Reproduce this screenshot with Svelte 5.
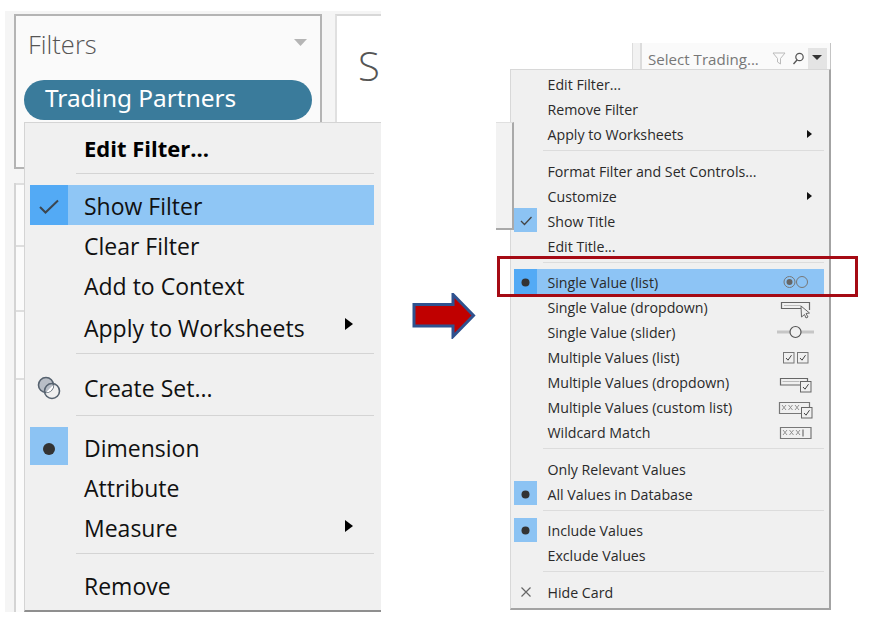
<script>
  const leftMenu = [
    [{ t: 'Edit Filter...', bold: true }],
    [
      { t: 'Show Filter', icon: 'check', hl: true },
      { t: 'Clear Filter' },
      { t: 'Add to Context' },
      { t: 'Apply to Worksheets', sub: true, nudge: true }
    ],
    [{ t: 'Create Set...', icon: 'set', nudge: true, tall: true }],
    [
      { t: 'Dimension', icon: 'dot' },
      { t: 'Attribute' },
      { t: 'Measure', sub: true }
    ],
    [{ t: 'Remove' }]
  ];
  const rightMenu = [
    [{ t: 'Edit Filter...' }, { t: 'Remove Filter' }, { t: 'Apply to Worksheets', sub: true }],
    [
      { t: 'Format Filter and Set Controls...' },
      { t: 'Customize', sub: true },
      { t: 'Show Title', icon: 'check' },
      { t: 'Edit Title...' }
    ],
    [
      { t: 'Single Value (list)', icon: 'dot', hl: true, right: 'radio' },
      { t: 'Single Value (dropdown)', right: 'drop' },
      { t: 'Single Value (slider)', right: 'slider' },
      { t: 'Multiple Values (list)', right: 'checks' },
      { t: 'Multiple Values (dropdown)', right: 'dropcheck' },
      { t: 'Multiple Values (custom list)', right: 'custom' },
      { t: 'Wildcard Match', right: 'wild' }
    ],
    [{ t: 'Only Relevant Values' }, { t: 'All Values in Database', icon: 'dot' }],
    [{ t: 'Include Values', icon: 'dot' }, { t: 'Exclude Values' }],
    [{ t: 'Hide Card', icon: 'x' }]
  ];
</script>

{#snippet leftIcon(name)}
  {#if name === 'check'}
    <svg class="lift" width="22" height="16" viewBox="0 0 22 16"><path d="M2 8l5.500 5.500L20 1.500" fill="none" stroke="#3c4650" stroke-width="2"/></svg>
  {:else if name === 'dot'}
    <svg class="lift-more" width="14" height="14" viewBox="0 0 14 14"><circle cx="7" cy="7" r="6" fill="#333"/></svg>
  {:else if name === 'set'}
    <svg width="24" height="24" viewBox="0 0 24 24">
      <circle cx="9" cy="9" r="7.500" fill="#b9bec6" stroke="#56626f" stroke-width="1.600"/>
      <circle cx="15" cy="15" r="7.500" fill="none" stroke="#56626f" stroke-width="1.600"/>
      <path d="M8.800 16.500L16.500 8.800A7.500 7.500 0 0 1 8.800 16.500z" fill="#fff"/>
    </svg>
  {/if}
{/snippet}

{#snippet rightIcon(name)}
  {#if name === 'check'}
    <svg class="lift" width="14" height="12" viewBox="0 0 14 12"><path d="M2 6l3.500 3.500L12.500 2" fill="none" stroke="#444" stroke-width="1.300"/></svg>
  {:else if name === 'dot'}
    <svg class="lift" width="9" height="9" viewBox="0 0 9 9"><circle cx="4.500" cy="4.500" r="4" fill="#333"/></svg>
  {:else if name === 'x'}
    <svg class="lift" width="12" height="12" viewBox="0 0 12 12"><path d="M1.500 1.500l9 9M10.500 1.500l-9 9" stroke="#666" stroke-width="1.200"/></svg>
  {/if}
{/snippet}

{#snippet styleIcon(name)}
  <svg class="style-icon" width="38" height="22" viewBox="0 0 38 22" fill="none" stroke="#666" stroke-width="1">
    {#if name === 'radio'}
      <circle cx="13.500" cy="10" r="5.500" stroke="#777"/><circle cx="13.500" cy="10" r="3" fill="#666" stroke="none"/><circle cx="26" cy="10" r="5.500" stroke="#777"/>
    {:else if name === 'drop'}
      <path d="M25 11.500H5.500v-6H33.500v7.500" stroke-width="1.200"/><path d="M8 8.500h17" stroke="#bbb"/>
      <path d="M25 9l8.500 7-3.500.5 2 3.500-2 1-1.500-3.500-3 2.500z" fill="#f0f0f0" stroke-width="1"/>
    {:else if name === 'slider'}
      <path d="M1 10h37" stroke="#c6c6c6" stroke-width="3"/><circle cx="19.500" cy="10" r="5.500" fill="#f0f0f0" stroke="#555" stroke-width="1.200"/>
    {:else if name === 'checks'}
      <rect x="7.500" y="5.500" width="10.500" height="10.500" stroke="#777"/><rect x="21.500" y="5.500" width="10.500" height="10.500" stroke="#777"/>
      <path d="M10 11l2 2.200 3.500-5M24 11l2 2.200 3.500-5" stroke="#444"/>
    {:else if name === 'dropcheck'}
      <path d="M24 13H4.500V6.500H31.500V9" stroke-width="1.200"/><path d="M6.500 9.500h17" stroke="#bbb"/>
      <rect x="24.500" y="9.500" width="10.500" height="10.500" fill="#f0f0f0" stroke="#666"/><path d="M27 15l2 2.200 3.500-5" stroke="#444"/>
    {:else if name === 'custom'}
      <path d="M25 16.500H3.500V5.500H33.500V10" stroke="#777" stroke-width="1.200"/>
      <path d="M6 8l4 5M10 8l-4 5M12.500 8l4 5M16.500 8l-4 5M19 8l4 5M23 8l-4 5" stroke="#888" stroke-width=".9"/>
      <rect x="25.500" y="10.500" width="10.500" height="10.500" fill="#f0f0f0" stroke="#666"/><path d="M28 16l2 2.200 3.500-5" stroke="#444"/>
    {:else if name === 'wild'}
      <path d="M4.500 5.500h30.500v11H4.500z" stroke="#777" stroke-width="1.200"/>
      <path d="M7 8l4 5M11 8l-4 5M13.500 8l4 5M17.500 8l-4 5M20 8l4 5M24 8l-4 5" stroke="#888" stroke-width=".9"/>
      <path d="M27 7.500v7" stroke="#555"/>
    {/if}
  </svg>
{/snippet}

<div class="page">
  <section class="shot-left">
    <div class="side">
      <div class="filters-card">
        <div class="card-head">
          <span>Filters</span>
          <svg width="13" height="7" viewBox="0 0 13 7"><path d="M0 0h13L6.500 7z" fill="#b5b5b5"/></svg>
        </div>
        <div class="pill">Trading Partners</div>
      </div>
      <div class="strips">
        <div class="strip s1"></div>
        <div class="strip s2"></div>
        <div class="strip s3"></div>
        <div class="strip"></div>
      </div>
    </div>
    <div class="sheet"><span>S</span></div>

    <div class="menu-left">
      {#each leftMenu as group, g}
        {#if g > 0}<div class="sep-left"></div>{/if}
        <div class="group-left">
          {#each group as item}
            <div class="row-left" class:hl={item.hl} class:bold={item.bold} class:nudge={item.nudge} class:tall={item.tall}>
              <span class="ico-left" class:on={item.icon === 'dot'} class:on-strong={item.hl}>
                {#if item.icon}{@render leftIcon(item.icon)}{/if}
              </span>
              <span class="label label-left">{item.t}</span>
              {#if item.sub}<i class="caret-left"></i>{/if}
            </div>
          {/each}
        </div>
      {/each}
    </div>
  </section>

  <svg class="arrow" width="64" height="46" viewBox="0 0 64 46">
    <path d="M2 11.500h39V1.500L61.500 22.500 41 43.500V33H2z" fill="#c00000" stroke="#2f528f" stroke-width="3"/>
  </svg>

  <section class="shot-right">
    <div class="top-bar">
      <span class="title">Select Trading...</span>
      <svg class="funnel" width="14" height="13" viewBox="0 0 14 13"><path d="M1 1h12L8.500 6.500V12l-3-2V6.500z" fill="none" stroke="#bbb"/></svg>
      <svg class="lens" width="13" height="13" viewBox="0 0 13 13"><circle cx="7.500" cy="5" r="3.700" fill="none" stroke="#555" stroke-width="1.200"/><path d="M5 8l-3.500 4" stroke="#555" stroke-width="1.300"/></svg>
      <span class="drop-btn"><i></i></span>
    </div>
    <div class="menu-right">
      {#each rightMenu as group, g}
        {#if g > 0}<div class="sep-right"></div>{/if}
        <div class="group-right">
          {#each group as item}
            <div class="row-right" class:hl={item.hl}>
              <span class="ico-right" class:on={item.icon === 'dot' || item.icon === 'check'} class:on-strong={item.hl}>
                {#if item.icon}{@render rightIcon(item.icon)}{/if}
              </span>
              <span class="label label-right">{item.t}</span>
              {#if item.sub}<i class="caret-right"></i>{/if}
              {#if item.right}{@render styleIcon(item.right)}{/if}
            </div>
          {/each}
        </div>
      {/each}
    </div>
    <div class="behind"></div>
    <div class="callout"></div>
  </section>
</div>

<style>
  :global(body) { margin: 0; background: #fff; }
  .page {
    position: relative;
    width: 878px;
    height: 628px;
    overflow: hidden;
    background: #fff;
    font-family: "Open Sans", "Noto Sans", sans-serif;
    color: #222;
    display: flex;
    align-items: flex-start;
  }

  /* left screenshot */
  .shot-left {
    position: relative;
    flex: none;
    width: 376px;
    height: 601px;
    margin: 11px 0 0 5px;
    background: #f5f5f5;
    display: flex;
    padding: 3px 0 0 9px;
    box-sizing: border-box;
    overflow: hidden;
  }
  .side { width: 308px; flex: none; }
  .filters-card {
    height: 155px;
    box-sizing: border-box;
    background: #fafafa;
    border: 2px solid #b4b4b4;
    padding: 15px 8px 0;
  }
  .card-head {
    display: flex;
    justify-content: space-between;
    align-items: center;
    padding: 0 5px 0 4px;
    font-size: 25.500px;
    line-height: 26px;
    color: #555;
    font-weight: 300;
  }
  .card-head svg { margin-top: -3px; }
  .pill {
    margin-top: 23px;
    height: 40px;
    border-radius: 20px;
    background: #3a7b9b;
    color: #fff;
    font-size: 24.400px;
    line-height: 36px;
    padding-left: 21px;
    font-family: "Noto Sans", sans-serif;
  }
  .strips { margin-top: 14px; height: 430px; border-left: 2px solid #d4d4d4; background: #fbfbfb; }
  .strip { border-top: 2px solid #dedede; }
  .s1 { height: 60px; }
  .s2 { height: 63px; }
  .s3 { height: 66px; }
  .sheet {
    flex: 1;
    margin-left: 13px;
    height: 108px;
    background: #fff;
    border-top: 2px solid #d8d8d8;
    border-left: 2px solid #e0e0e0;
    overflow: hidden;
    font-size: 40px;
    line-height: 100px;
    color: #555;
    padding-left: 21px;
    font-weight: 300;
  }
  .menu-left {
    position: absolute;
    left: 19px;
    top: 111px;
    width: 357px;
    height: 490px;
    box-sizing: border-box;
    padding: 4px 7px 0 5px;
    background: #f0f0f0;
    border: 1px solid #d4d4d4;
    border-right: 0;
    border-bottom: 2px solid #8f8f8f;
    color: #111;
    font-size: 23px;
  }
  .group-left { display: flex; flex-direction: column; }
  .row-left { display: flex; align-items: center; height: 40px; position: relative; flex: none; }
  .row-left.hl { background: #8fc6f5; }
  .row-left.bold { font-weight: 700; font-size: 22px; color: #000; }
  .row-left.nudge { height: 42px; padding-top: 2px; box-sizing: border-box; }
  .row-left.tall { height: 44px; padding-bottom: 2px; }
  .label-left { padding-top: 2px; }
  .ico-left { width: 38px; height: 38px; margin-right: 16px; display: flex; align-items: center; justify-content: center; flex: none; align-self: flex-start; }
  .ico-left.on { background: #8cc3f3; }
  .ico-left.on-strong { background: #53aaf5; height: 40px; }
  .row-left.tall .ico-left { height: 42px; }
  .lift { margin-top: 4px; }
  .lift-more { margin-top: 6px; }
  .sep-left { height: 1px; background: #d4d4d4; margin: 6px 0 11px 46px; }
  .caret-left { position: absolute; left: 315px; top: 13px; border-left: 8px solid #000; border-top: 6px solid transparent; border-bottom: 6px solid transparent; }

  /* arrow */
  .arrow { flex: none; margin: 293px 0 0 31px; }

  /* right screenshot */
  .shot-right {
    position: absolute;
    left: 510px;
    top: 43px;
    width: 348px;
    height: 570px;
  }
  .top-bar {
    position: absolute;
    left: 130px;
    top: 0;
    width: 191px;
    height: 26px;
    box-sizing: border-box;
    padding-left: 6px;
    background: #fafafa;
    border-left: 2px solid #dcdcdc;
    border-right: 1px solid #c4c4c4;
    display: flex;
    align-items: center;
    color: #777;
    font-size: 15.100px;
  }
  .top-bar::before { content: ""; position: absolute; left: -10px; top: 0; height: 26px; width: 8px; background: #f2f2f2; border-left: 1px solid #dcdcdc; box-sizing: border-box; }
  .title { white-space: nowrap; margin-right: 13px; margin-top: 6px; }
  .top-bar svg { margin-top: 5px; flex: none; }
  .funnel { margin-right: 6px; }
  .lens { margin-right: 3px; }
  .drop-btn { width: 19px; height: 21px; background: #e4e4e4; margin-top: 5px; display: flex; align-items: center; justify-content: center; flex: none; }
  .drop-btn i { border-top: 5px solid #333; border-left: 5px solid transparent; border-right: 5px solid transparent; margin-top: -3px; }
  .behind {
    position: absolute;
    left: -14px;
    top: 79px;
    width: 18px;
    height: 108px;
    background: #f2f2f2;
    border-top: 1px solid #e0e0e0;
    border-right: 2px solid #a9a9a9;
    border-bottom: 2px solid #a9a9a9;
    box-sizing: border-box;
  }
  .menu-right {
    position: absolute;
    left: 0;
    top: 26px;
    width: 321px;
    height: 541px;
    box-sizing: border-box;
    padding: 1px 5px 0 3px;
    background: #f0f0f0;
    border: 1px solid #d8d8d8;
    border-right: 2px solid #a3a3a3;
    border-bottom: 2px solid #a3a3a3;
    color: #2a2a2a;
    font-size: 14.200px;
  }
  .row-right { display: flex; align-items: center; height: 25px; position: relative; }
  .row-right.hl { background: #8dc4f5; height: 25px; }
  .label-right { padding-top: 2px; }
  .ico-right { width: 23px; height: 24px; margin-right: 10.500px; display: flex; align-items: center; justify-content: center; flex: none; }
  .ico-right.on { background: #8cc3f3; }
  .ico-right.on-strong { background: #53aaf5; height: 25px; }
  .ico-right .lift { margin-top: 2px; }
  .sep-right { height: 1px; background: #dcdcdc; margin: 4px 0 6.500px 29px; }
  .caret-right { position: absolute; left: 293px; top: 9px; border-left: 5px solid #111; border-top: 4.500px solid transparent; border-bottom: 4.500px solid transparent; }
  .style-icon { position: absolute; right: 10px; top: 3px; overflow: visible; }
  .callout {
    position: absolute;
    left: -13px;
    top: 213px;
    width: 361px;
    height: 41px;
    box-sizing: border-box;
    border: 3px solid #a50a14;
  }
  .label { white-space: nowrap; }
</style>
